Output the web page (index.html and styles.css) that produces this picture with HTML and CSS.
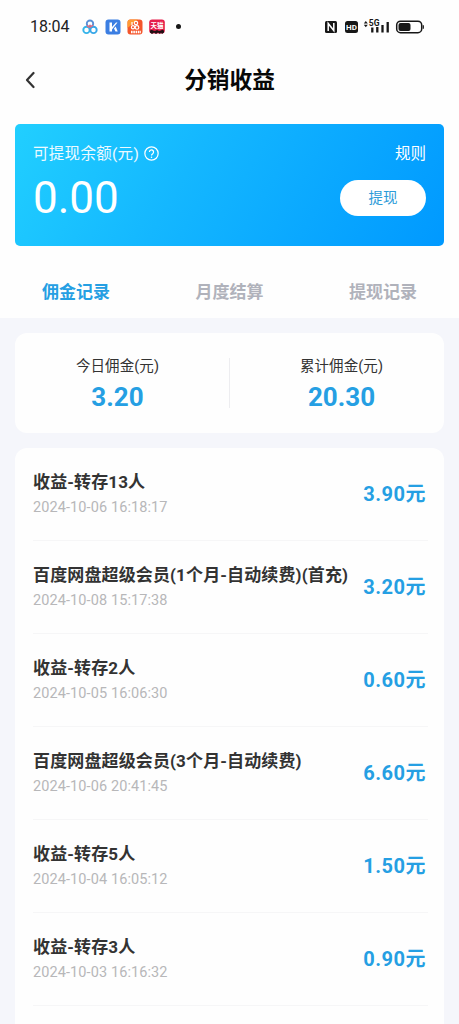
FILE: index.html
```html
<!DOCTYPE html>
<html lang="zh-CN">
<head>
<meta charset="utf-8">
<title>分销收益</title>
<link rel="stylesheet" href="styles.css">
</head>
<body>
<div class="screen">
  <header class="top">
    <div class="status">
      <div class="status-left">
        <span class="clock">18:04</span>
        <svg class="app" viewBox="0 0 16 16"><g fill="none" stroke-width="1.900"><path d="M6.200 8.600L8 6.600l1.800 2" stroke="#e8697c"/><circle cx="8" cy="4.700" r="3.200" stroke="#5a90d8"/><circle cx="4.500" cy="10.900" r="3.200" stroke="#35b4ea"/><circle cx="11.500" cy="10.900" r="3.200" stroke="#38a7e8"/><path d="M5 6.200Q6 8.500 8 8t3-1.800" stroke="#e8697c" stroke-width="1.300"/></g></svg>
        <svg class="app" viewBox="0 0 16 16"><rect x=".5" y=".5" width="15" height="15" rx="3" fill="#3b7ee2"/><path d="M4.500 3.500H7V8l4-4.500h1.500L7 10.500v2H4.500zM9 9.500l1.700-2 2 5h-2.200z" fill="#fff"/></svg>
        <svg class="app" viewBox="0 0 16 16"><rect x=".5" y=".5" width="15" height="15" rx="3" fill="#f4562c"/><path d="M.5 9V3.500a3 3 0 0 1 3-3H11z" fill="#ff9b35"/><g fill="none" stroke="#fff" stroke-width="1.200"><circle cx="9" cy="4" r="1.700"/><circle cx="6" cy="8.200" r="1.600"/><circle cx="10" cy="8.400" r="1.800"/><path d="M5 3v3"/></g><path d="M4 13h10" stroke="#fff" stroke-width="2.400" stroke-dasharray="1.600 .7"/></svg>
        <svg class="app" viewBox="0 0 16 16"><rect x=".2" y=".5" width="15.600" height="14" rx="3" fill="#e51c4a"/><path d="M1 12q1-2 3-.5l2 .5 2-1 2 1 2-.5q2-1.500 3 .5v1.500l-2 1.500-1-1.500-1 1.500-2-1.500-2 1.500-2-1.500-2 1.500-2-1.500z" fill="#211014"/><text class="cat" x="8" y="8.800" text-anchor="middle">天猫</text></svg>
        <i class="dot"></i>
      </div>
      <svg class="signals" viewBox="0 0 102 16">
        <rect x="1" y="2" width="12" height="12" rx="1.500" fill="#171717"/><path d="M4.200 12V4.500l5.600 7V4" fill="none" stroke="#fff" stroke-width="1.500"/>
        <rect x="21" y="2" width="13" height="12" rx="2.500" fill="#171717"/><text class="hd" x="27.500" y="11" text-anchor="middle">HD</text>
        <path d="M39.800 4.400L41.800 2l2 2.400zM39.800 5.800h4l-2 2.400z" fill="#171717"/><text class="five" x="44.800" y="6.800">5G</text>
        <path d="M48.300 8.500v5M53.300 8v5.500M58.500 6v7.500M63.700 3v10.500" stroke="#171717" stroke-width="2.300"/>
        <rect x="72.700" y="2.200" width="25" height="11.500" rx="3.800" fill="none" stroke="#171717" stroke-width="1.500"/><rect x="74.500" y="4" width="12" height="8" rx="2" fill="#171717"/><path d="M99.300 6.200v3.600" stroke="#171717" stroke-width="1.200"/>
      </svg>
    </div>
    <div class="nav">
      <svg class="back" viewBox="0 0 10 18"><path d="M8.500 2L2 9l6.500 7" fill="none" stroke="#333" stroke-width="2.200" stroke-linecap="round" stroke-linejoin="round"/></svg>
      <h1 class="title">分销收益</h1>
    </div>
    <section class="balance">
      <div class="balance-head">
        <span class="balance-label">可提现余额(元)</span>
        <svg class="help" viewBox="0 0 16 16"><g fill="none" stroke="#fff" stroke-width="1.300"><circle cx="8" cy="8" r="7.100"/><path d="M5.800 6.500a2.200 2.200 0 1 1 3.500 1.700Q8 9 8 10.200"/></g><circle cx="8" cy="12" r=".8" fill="#fff"/></svg>
        <span class="rules">规则</span>
      </div>
      <div class="balance-body">
        <span class="balance-value">0.00</span>
        <span class="withdraw">提现</span>
      </div>
    </section>
    <nav class="tabs">
      <span class="tab active">佣金记录</span>
      <span class="tab">月度结算</span>
      <span class="tab">提现记录</span>
    </nav>
  </header>
  <main class="content">
    <section class="summary">
      <div class="stat today"><span class="stat-label">今日佣金(元)</span><strong class="stat-value">3.20</strong></div>
      <i class="divider"></i>
      <div class="stat total"><span class="stat-label">累计佣金(元)</span><strong class="stat-value">20.30</strong></div>
    </section>
    <section class="records">
      <div class="record"><div class="info"><span class="name">收益-转存13人</span><span class="date">2024-10-06 16:18:17</span></div><span class="amount">3.90元</span></div>
      <div class="record"><div class="info"><span class="name">百度网盘超级会员(1个月-自动续费)(首充)</span><span class="date">2024-10-08 15:17:38</span></div><span class="amount">3.20元</span></div>
      <div class="record"><div class="info"><span class="name">收益-转存2人</span><span class="date">2024-10-05 16:06:30</span></div><span class="amount">0.60元</span></div>
      <div class="record"><div class="info"><span class="name">百度网盘超级会员(3个月-自动续费)</span><span class="date">2024-10-06 20:41:45</span></div><span class="amount">6.60元</span></div>
      <div class="record"><div class="info"><span class="name">收益-转存5人</span><span class="date">2024-10-04 16:05:12</span></div><span class="amount">1.50元</span></div>
      <div class="record"><div class="info"><span class="name">收益-转存3人</span><span class="date">2024-10-03 16:16:32</span></div><span class="amount">0.90元</span></div>
    </section>
  </main>
</div>
</body>
</html>
```
FILE: styles.css
```css
* { box-sizing: border-box; }
body { margin: 0; font-family: Roboto, "Noto Sans CJK SC", sans-serif; background: #f5f6fb; }
.screen { height: 1024px; overflow: hidden; display: flex; flex-direction: column; }
.top { height: 318px; flex: none; background: #fefefe; padding: 0 15px; }
.status { height: 52px; padding: 1px 18px 0 15px; display: flex; align-items: center; justify-content: space-between; }
.status-left { display: flex; align-items: center; gap: 6.300px; }
.clock { width: 46px; font-size: 16px; line-height: 20px; letter-spacing: -.1px; color: #222; }
.app { width: 16px; height: 16px; }
.cat { font-size: 6.500px; font-weight: 700; fill: #fff; }
.dot { width: 5px; height: 5px; border-radius: 50%; background: #171717; margin-left: 5px; }
.signals { width: 102px; height: 16px; }
.hd { font-size: 8px; font-weight: 700; fill: #fff; }
.five { font-size: 8.500px; font-weight: 700; fill: #171717; }
.nav { height: 54px; display: grid; grid-template-columns: 30px 1fr 30px; align-items: center; }
.back { width: 10px; height: 18px; margin-left: 10px; margin-top: 2px; }
.title { margin: 3px 0 0; text-align: center; font-size: 22.700px; line-height: 30px; font-weight: 700; color: #080808; }
.balance { height: 122px; margin-top: 18px; border-radius: 5px; padding: 19px 18px 0 18px; color: #fff; background: linear-gradient(120deg, #21cfff 0%, #14b7ff 40%, #0099ff 100%); }
.balance-head { display: flex; align-items: center; height: 22px; font-size: 15.500px; line-height: 22px; }
.balance-label { opacity: .92; letter-spacing: .3px; }
.help { width: 15px; height: 15px; margin-left: 5px; margin-top: -1px; }
.rules { margin-left: auto; }
.balance-body { display: flex; align-items: center; justify-content: space-between; height: 66px; }
.balance-value { font-size: 44px; line-height: 50px; }
.withdraw { width: 86px; height: 36px; border-radius: 18px; background: #fff; color: #2b9bd8; font-size: 14.500px; line-height: 38px; text-align: center; }
.tabs { display: flex; justify-content: space-between; padding: 34px 27px 0; }
.tab { font-size: 17px; line-height: 24px; font-weight: 700; color: #b0b2bb; }
.tab.active { color: #259fe3; }
.content { padding: 15px 15px 0; display: flex; flex-direction: column; gap: 15px; }
.summary { height: 100px; flex: none; border-radius: 12px; background: #fefefe; display: grid; grid-template-columns: 1fr 1px 1fr; align-items: center; }
.stat { display: flex; flex-direction: column; align-items: center; padding-top: 5px; }
.today { padding-right: 9px; }
.total { padding-left: 9px; }
.stat-label { font-size: 14.500px; line-height: 22px; letter-spacing: .1px; color: #333; }
.stat-value { font-size: 26px; line-height: 38px; font-weight: 700; color: #259fe3; }
.divider { width: 1px; height: 50px; background: #ededf0; }
.records { height: 620px; flex: none; border-radius: 12px 12px 0 0; background: #fefefe; padding: 0 16px 0 18px; }
.record { height: 93px; display: flex; justify-content: space-between; border-bottom: 1px solid #f6f6f7; padding: 22px 2px 0 0; }
.info { display: flex; flex-direction: column; }
.name { font-size: 17px; line-height: 24px; font-weight: 700; letter-spacing: .13px; color: #333; white-space: nowrap; }
.date { font-size: 14.500px; line-height: 27px; letter-spacing: .1px; color: #b7b7b9; white-space: nowrap; }
.amount { font-size: 20px; line-height: 48px; font-weight: 700; letter-spacing: .5px; color: #259fe3; white-space: nowrap; }
```
